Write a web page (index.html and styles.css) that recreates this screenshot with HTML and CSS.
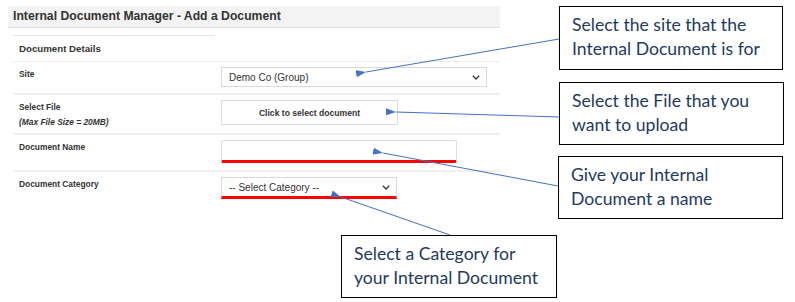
FILE: index.html
```html
<!DOCTYPE html>
<html lang="en">
<head>
<meta charset="utf-8">
<title>Internal Document Manager - Add a Document</title>
<link rel="stylesheet" href="styles.css">
</head>
<body>
<div class="page">
  <section class="panel">
    <h1 class="panel-title">Internal Document Manager - Add a Document</h1>
    <div class="form">
      <div class="row row-section">
        <div class="cell-label section-label">Document Details</div>
        <div class="cell-control"></div>
      </div>
      <div class="row row-site">
        <div class="cell-label"><span class="label">Site</span></div>
        <div class="cell-control">
          <div class="select select-site">
            <span>Demo Co (Group)</span>
            <svg class="chev" width="8" height="5" viewBox="0 0 8 5"><path d="M0.8 0.8 L4 4 L7.2 0.8" fill="none" stroke="#333" stroke-width="1.3"/></svg>
          </div>
        </div>
      </div>
      <div class="row row-file">
        <div class="cell-label">
          <span class="label">Select File</span>
          <span class="label hint">(Max File Size = 20MB)</span>
        </div>
        <div class="cell-control">
          <div class="file-button">Click to select document</div>
        </div>
      </div>
      <div class="row row-name">
        <div class="cell-label"><span class="label">Document Name</span></div>
        <div class="cell-control">
          <div class="text-input required"></div>
        </div>
      </div>
      <div class="row row-category">
        <div class="cell-label"><span class="label">Document Category</span></div>
        <div class="cell-control">
          <div class="select select-category required">
            <span>-- Select Category --</span>
            <svg class="chev" width="8" height="5" viewBox="0 0 8 5"><path d="M0.8 0.8 L4 4 L7.2 0.8" fill="none" stroke="#333" stroke-width="1.3"/></svg>
          </div>
        </div>
      </div>
    </div>
  </section>

  <svg class="arrows" width="795" height="302" viewBox="0 0 795 302">
    <defs>
      <marker id="ah" markerUnits="userSpaceOnUse" markerWidth="10" markerHeight="8" refX="0" refY="4" orient="auto-start-reverse" viewBox="0 0 10 8">
        <path d="M0 4 L10 0.5 L10 7.5 Z" fill="#4472c4"/>
      </marker>
    </defs>
    <line x1="366" y1="72" x2="559" y2="39" stroke="#4472c4" stroke-width="1" marker-start="url(#ah)"/>
    <line x1="396" y1="112" x2="559" y2="117" stroke="#4472c4" stroke-width="1" marker-start="url(#ah)"/>
    <line x1="383" y1="153" x2="558" y2="186" stroke="#4472c4" stroke-width="1" marker-start="url(#ah)"/>
    <line x1="341" y1="197" x2="450" y2="235" stroke="#4472c4" stroke-width="1" marker-start="url(#ah)"/>
  </svg>

  <div class="callout callout-site">Select the site that the Internal Document is for</div>
  <div class="callout callout-file">Select the File that you want to upload</div>
  <div class="callout callout-name">Give your Internal Document a name</div>
  <div class="callout callout-category">Select a Category for your Internal Document</div>
</div>
</body>
</html>
```

FILE: styles.css
```css
* { box-sizing: border-box; }
html, body {
  margin: 0;
  padding: 0;
  background: #ffffff;
}
.page {
  position: relative;
  width: 795px;
  height: 302px;
  overflow: hidden;
  font-family: "Liberation Sans", Arial, sans-serif;
  color: #333333;
}
.panel {
  margin: 6px 0 0 8px;
  width: 492px;
}
.panel-title {
  margin: 0;
  height: 22px;
  padding-left: 5px;
  background: #f3f3f3;
  border-bottom: 1px solid #e2e2e2;
  font-size: 12.2px;
  line-height: 20px;
  font-weight: bold;
  color: #333333;
}
.form {
  margin-top: 7px;
  padding-left: 5px;
}
.row {
  display: flex;
  border-bottom: 2px solid #efefef;
}
.cell-label {
  width: 202px;
  flex: none;
  padding-left: 6px;
  padding-top: 7px;
  display: flex;
  flex-direction: column;
}
.cell-control {
  flex: 1;
  padding-left: 6px;
}
.row-section {
  border-bottom: 1px solid #ececec;
}
.row-section .cell-label {
  border-top: 1px solid #e6e6e6;
  padding-top: 7px;
  padding-bottom: 6px;
  font-size: 9.7px;
  line-height: 12px;
  font-weight: bold;
  color: #333;
}
.label {
  font-size: 8.4px;
  line-height: 10px;
  font-weight: bold;
  color: #333;
}
.hint {
  font-style: italic;
  margin-top: 5px;
}
.row-site .cell-control { padding-top: 5px; padding-bottom: 6px; }
.row-file .cell-control { padding-top: 5px; padding-bottom: 8px; }
.row-name .cell-control { padding-top: 5px; padding-bottom: 7px; }
.row-category { border-bottom: none; }
.row-category .cell-control { padding-top: 5px; padding-bottom: 6px; }

.select {
  display: flex;
  align-items: center;
  justify-content: space-between;
  height: 20px;
  padding: 0 6px 0 7px;
  background: #fff;
  border: 1px solid #d9d9d9;
  font-size: 10px;
  color: #333;
}
.select-site { width: 266px; }
.select-category { width: 176px; height: 22px; }
.chev { display: block; }

.file-button {
  width: 177px;
  height: 25px;
  border: 1px solid #dcdcdc;
  background: #fff;
  display: flex;
  align-items: center;
  justify-content: center;
  font-size: 8.6px;
  font-weight: bold;
  color: #333;
}
.text-input {
  width: 236px;
  height: 23px;
  border: 1px solid #dcdcdc;
  border-radius: 2px;
  background: #fff;
}
.required {
  border-bottom: 3px solid #ff0000;
}

.arrows {
  position: absolute;
  left: 0;
  top: 0;
  pointer-events: none;
}

.callout {
  position: absolute;
  border: 1px solid #000;
  background: #fff;
  padding: 6px 10px 8px 12px;
  font-family: Lato, "Open Sans", sans-serif;
  font-size: 17.6px;
  line-height: 24px;
  color: #1f3a5f;
}
.callout-site { left: 559px; top: 6px; width: 224px; height: 64px; }
.callout-file { left: 559px; top: 82px; width: 225px; height: 63px; }
.callout-name { left: 558px; top: 156px; width: 225px; height: 63px; }
.callout-category { left: 341px; top: 235px; width: 216px; height: 63px; }
```
